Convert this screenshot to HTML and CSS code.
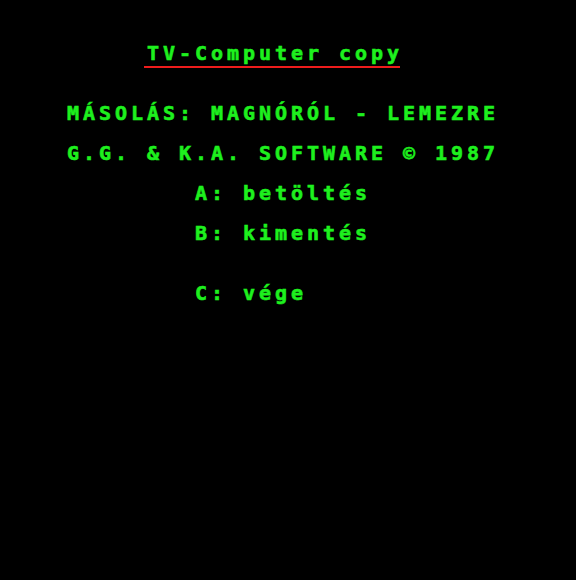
FILE: index.html
```html
<!DOCTYPE html>
<html lang="hu">
<head>
<meta charset="utf-8">
<title>TV-Computer copy</title>
<link rel="stylesheet" href="styles.css">
</head>
<body>
<main class="screen">
  <div class="row r2 c9"><span class="title">TV-Computer copy</span></div>
  <div class="row r5 c4">MÁSOLÁS: MAGNÓRÓL - LEMEZRE</div>
  <div class="row r7 c4">G.G. &amp; K.A. SOFTWARE © 1987</div>
  <div class="row r9 c12">A: betöltés</div>
  <div class="row r11 c12">B: kimentés</div>
  <div class="row r14 c12">C: vége</div>
</main>
</body>
</html>
```
FILE: styles.css
```css
html, body {
  margin: 0;
  padding: 0;
  background: #000;
}

.screen {
  width: 576px;
  height: 580px;
  box-sizing: border-box;
  padding-top: 3px;
  display: grid;
  grid-template-rows: repeat(28, 20px);
  font-family: "DejaVu Sans Mono", "Liberation Mono", monospace;
  font-weight: bold;
  font-size: 20px;
  line-height: 20px;
  letter-spacing: 3.96px;
  color: #1ef01e;
  -webkit-text-stroke: 0.6px #1ef01e;
  white-space: pre;
}

.row { height: 20px; }

.r2 { grid-row: 3; }
.r5 { grid-row: 6; }
.r7 { grid-row: 8; }
.r9 { grid-row: 10; }
.r11 { grid-row: 12; }
.r14 { grid-row: 15; }

.c4 { padding-left: 67px; }
.c9 { padding-left: 147px; }
.c12 { padding-left: 195px; }

.title {
  display: inline-block;
  height: 20px;
  margin-left: -3px;
  padding-left: 3px;
  padding-bottom: 3px;
  border-bottom: 2px solid #ee1c1c;
  width: 253px;
}
```
